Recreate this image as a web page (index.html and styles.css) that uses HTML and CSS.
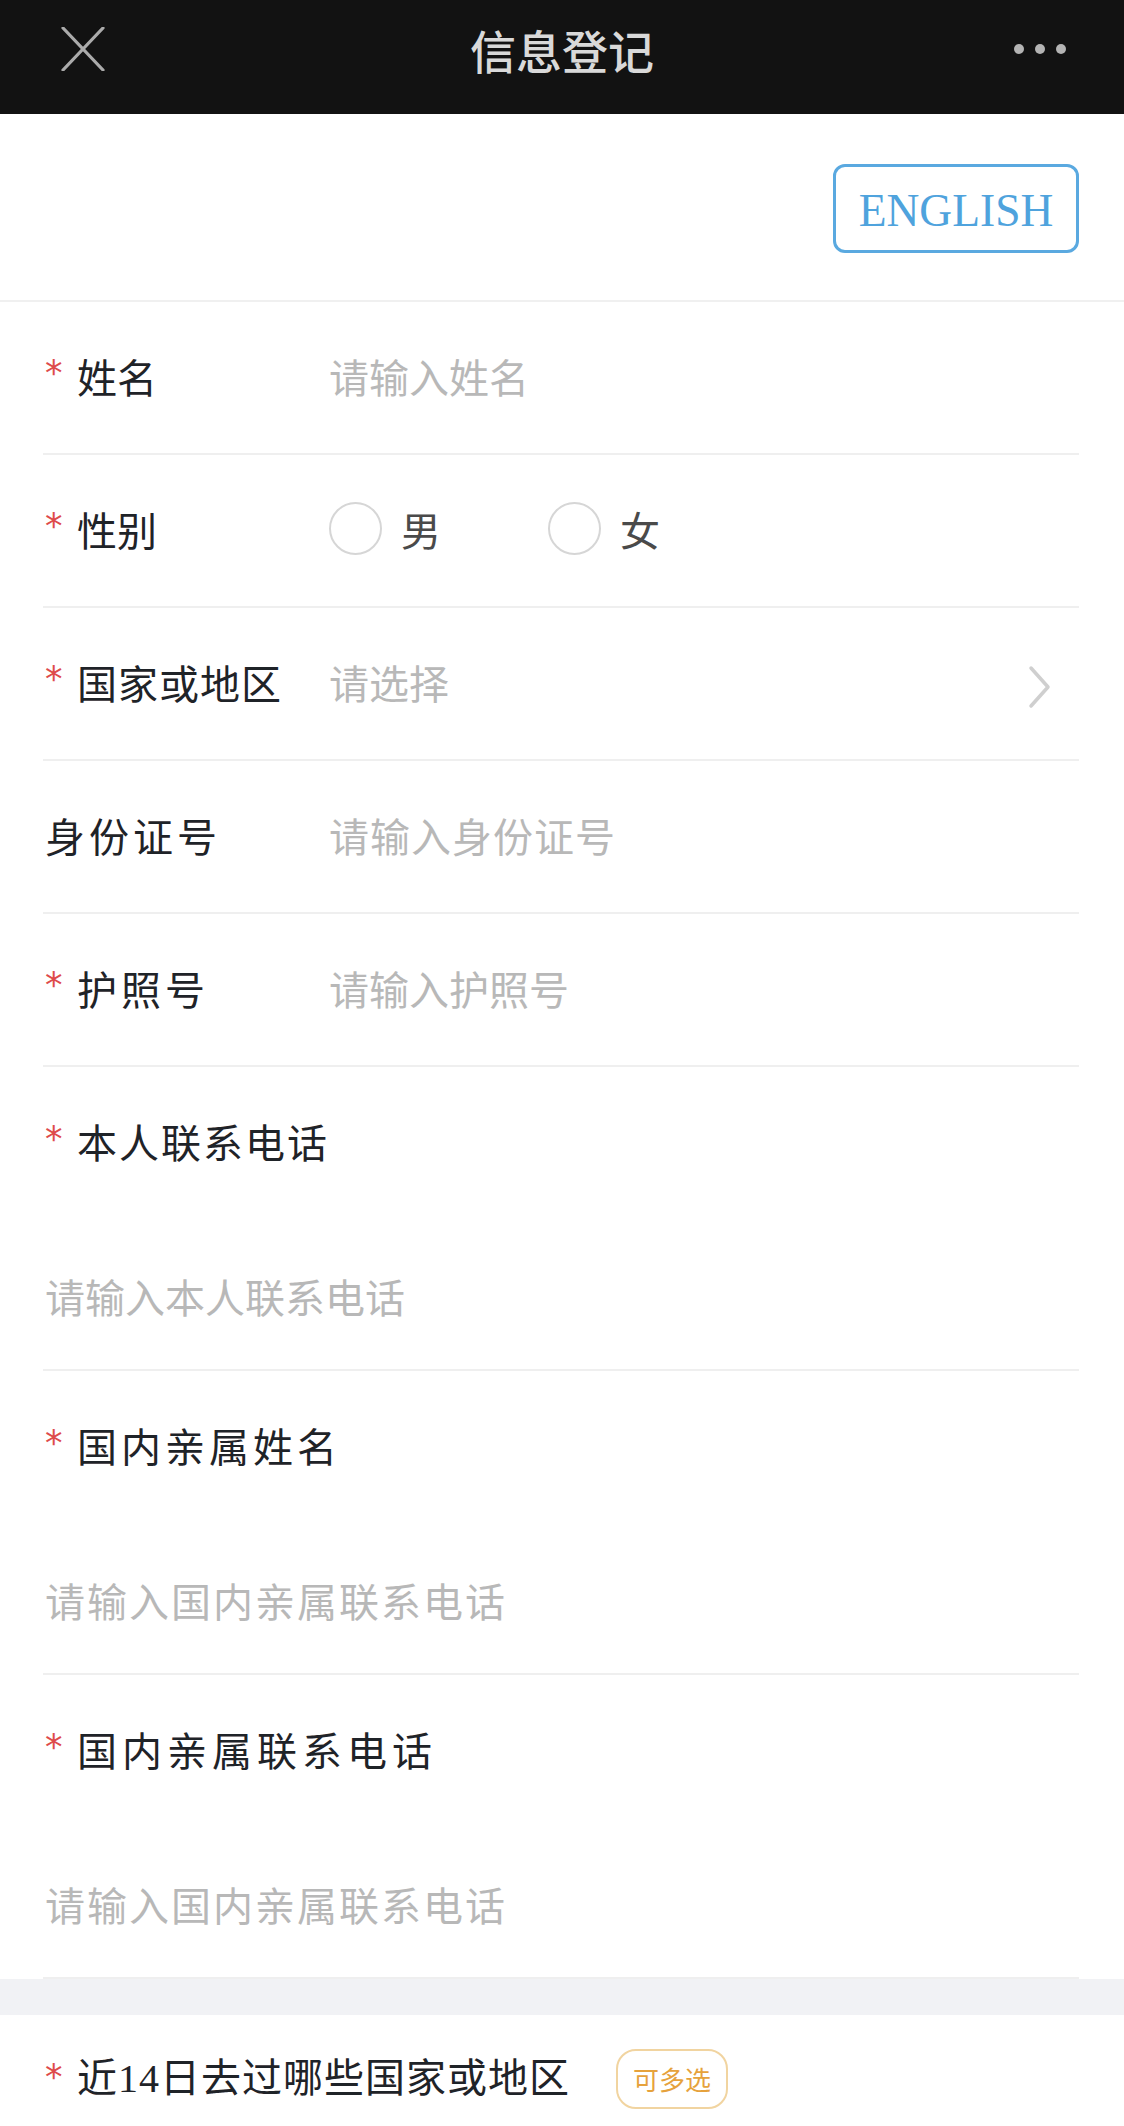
FILE: index.html
```html
<!DOCTYPE html>
<html lang="zh-CN">
<head>
<meta charset="utf-8">
<title>信息登记</title>
<link rel="stylesheet" href="styles.css">
</head>
<body>
<div class="page">
  <header class="navbar">
    <div class="nav-left">
      <svg class="close-icon" width="44" height="44" viewBox="0 0 44 44" aria-hidden="true">
        <line x1="2" y1="1" x2="42" y2="43" />
        <line x1="42" y1="1" x2="2" y2="43" />
      </svg>
    </div>
    <h1 class="nav-title">信息登记</h1>
    <div class="nav-right">
      <span class="dot"></span><span class="dot"></span><span class="dot"></span>
    </div>
  </header>

  <section class="lang-bar">
    <button class="lang-btn" type="button">ENGLISH</button>
  </section>

  <form class="form">
    <div class="row">
      <label class="label"><span class="req">*</span>姓名</label>
      <input class="field" type="text" placeholder="请输入姓名">
    </div>
    <div class="row">
      <label class="label"><span class="req">*</span>性别</label>
      <div class="radios">
        <span class="radio"><span class="radio-circle"></span><span class="radio-text">男</span></span>
        <span class="radio"><span class="radio-circle"></span><span class="radio-text">女</span></span>
      </div>
    </div>
    <div class="row">
      <label class="label"><span class="req">*</span><span class="sp-1">国家或地区</span></label>
      <input class="field" type="text" placeholder="请选择" readonly>
      <svg class="chevron" width="26" height="44" viewBox="0 0 26 44" aria-hidden="true">
        <polyline points="4,3 21,22 4,41" />
      </svg>
    </div>
    <div class="row">
      <label class="label label-plain"><span class="sp-4">身份证号</span></label>
      <input class="field sp-1" type="text" placeholder="请输入身份证号">
    </div>
    <div class="row">
      <label class="label"><span class="req">*</span><span class="sp-4">护照号</span></label>
      <input class="field" type="text" placeholder="请输入护照号">
    </div>
    <div class="row-stack">
      <label class="stack-label"><span class="req">*</span><span class="sp-2">本人联系电话</span></label>
      <input class="stack-field" type="text" placeholder="请输入本人联系电话">
    </div>
    <div class="row-stack">
      <label class="stack-label"><span class="req">*</span><span class="sp-4">国内亲属姓名</span></label>
      <input class="stack-field sp-2" type="text" placeholder="请输入国内亲属联系电话">
    </div>
    <div class="row-stack">
      <label class="stack-label"><span class="req">*</span><span class="sp-5">国内亲属联系电话</span></label>
      <input class="stack-field sp-2" type="text" placeholder="请输入国内亲属联系电话">
    </div>
  </form>

  <div class="band"></div>

  <section class="form form-last">
    <div class="last-label">
      <span class="req">*</span><span class="sp-1">近14日去过哪些国家或地区</span>
      <span class="badge">可多选</span>
    </div>
  </section>
</div>
</body>
</html>
```

FILE: styles.css
```css
* {
  box-sizing: border-box;
}

html, body {
  margin: 0;
  padding: 0;
  background: #ffffff;
}

body {
  font-family: "Liberation Serif", "Noto Sans CJK SC", serif;
  color: #1f2328;
  width: 1124px;
}

.page {
  width: 1124px;
  overflow: hidden;
}

/* Navbar */
.navbar {
  height: 114px;
  background: #121212;
  display: grid;
  grid-template-columns: 1fr auto 1fr;
  align-items: center;
  padding-bottom: 16px;
}

.nav-left {
  padding-left: 61px;
  display: flex;
  align-items: center;
}

.close-icon line {
  stroke: #ababab;
  stroke-width: 3.2;
  stroke-linecap: round;
}

.nav-title {
  margin: 0;
  font-family: "Noto Sans CJK SC", sans-serif;
  font-size: 46px;
  font-weight: 500;
  color: #d9d9d9;
  line-height: 60px;
  letter-spacing: 0;
}

.nav-right {
  justify-self: end;
  padding-right: 58px;
  display: flex;
  gap: 11px;
  align-items: center;
}

.dot {
  width: 10px;
  height: 10px;
  border-radius: 50%;
  background: #b4b4b4;
}

/* Language bar */
.lang-bar {
  height: 188px;
  display: flex;
  justify-content: flex-end;
  align-items: center;
  padding-right: 45px;
  padding-top: 2px;
  border-bottom: 2px solid #f0f0f0;
}

.lang-btn {
  width: 246px;
  height: 89px;
  border: 3px solid #5aa9e0;
  border-radius: 12px;
  background: #ffffff;
  color: #4fa3dd;
  font-family: "Liberation Serif", serif;
  font-size: 45.5px;
  padding: 5px 0 0 0;
  line-height: 1;
}

/* Form rows */
.form {
  padding: 0 45px 0 43px;
}

.row {
  height: 153px;
  display: flex;
  align-items: center;
  padding-bottom: 4px;
  border-bottom: 2px solid #efefef;
}

.label {
  width: 286px;
  flex: none;
  font-family: "Noto Sans CJK SC", sans-serif;
  font-size: 40px;
  line-height: 60px;
  color: #1f2328;
  display: flex;
  align-items: center;
  white-space: nowrap;
}

.label-plain {
  padding-left: 2px;
}

.sp-1 { letter-spacing: 1px; }
.sp-2 { letter-spacing: 2px; }
.sp-4 { letter-spacing: 4px; }
.sp-5 { letter-spacing: 5px; }

.req {
  display: inline-block;
  width: 34px;
  flex: none;
  padding-left: 2px;
  color: #de4b4b;
  font-family: "DejaVu Sans", sans-serif;
  font-size: 35px;
  line-height: 1;
  letter-spacing: 0;
  transform: translateY(-2px);
}

.field {
  flex: 1;
  min-width: 0;
  border: none;
  outline: none;
  background: transparent;
  font-family: "Noto Sans CJK SC", sans-serif;
  font-size: 40px;
  line-height: 60px;
  height: 60px;
  padding: 0;
  color: #1f2328;
}

.field::placeholder,
.stack-field::placeholder {
  color: #b8b8b8;
  opacity: 1;
}

.chevron {
  flex: none;
  margin-right: 26px;
  margin-top: 10px;
}

.chevron polyline {
  fill: none;
  stroke: #cfcfcf;
  stroke-width: 3.5;
  stroke-linecap: round;
  stroke-linejoin: round;
}

/* Radios */
.radios {
  display: flex;
  align-items: center;
  gap: 107px;
}

.radio {
  display: flex;
  align-items: center;
  gap: 19px;
}

.radio-circle {
  width: 53px;
  height: 53px;
  border-radius: 50%;
  border: 2.5px solid #d6d6d6;
  background: #fff;
}

.radio-text {
  font-family: "Noto Sans CJK SC", sans-serif;
  font-size: 40px;
  line-height: 60px;
  color: #4a4a4a;
}

/* Stacked rows */
.row-stack {
  height: 304px;
  display: flex;
  flex-direction: column;
  border-bottom: 2px solid #efefef;
}

.stack-label {
  height: 148px;
  flex: none;
  display: flex;
  align-items: center;
  font-family: "Noto Sans CJK SC", sans-serif;
  font-size: 40px;
  line-height: 60px;
  color: #1f2328;
  white-space: nowrap;
}

.stack-field {
  height: 154px;
  padding: 8px 0 0 2px;
  border: none;
  outline: none;
  background: transparent;
  font-family: "Noto Sans CJK SC", sans-serif;
  font-size: 40px;
  line-height: 60px;
  color: #1f2328;
}

/* Band */
.band {
  height: 36px;
  background: #f1f2f5;
}

/* Last section */
.form-last {
  padding-top: 34px;
  padding-bottom: 40px;
}

.last-label {
  display: flex;
  align-items: center;
  font-family: "Liberation Serif", "Noto Sans CJK SC", serif;
  font-size: 40px;
  line-height: 60px;
  color: #1f2328;
  white-space: nowrap;
}

.badge {
  margin-left: 46px;
  height: 60px;
  padding: 0 15px;
  display: inline-flex;
  align-items: center;
  border: 2px solid #f1d4a0;
  border-radius: 20px;
  font-family: "Noto Sans CJK SC", sans-serif;
  font-size: 26px;
  line-height: 1;
  letter-spacing: 0;
  color: #e6a23c;
}
```
